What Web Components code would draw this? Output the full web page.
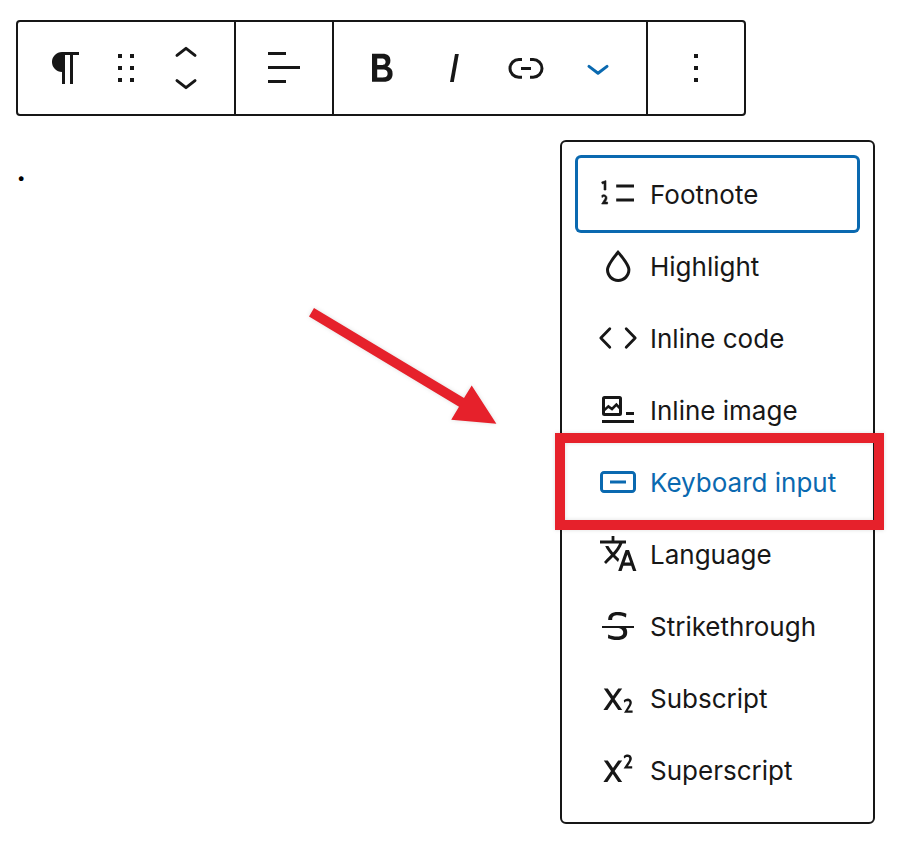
<!DOCTYPE html>
<html lang="en">
<head>
<meta charset="utf-8">
<title>Block editor</title>
<style>
  body {
    margin: 0;
    background: #fff;
    color: #171717;
    font-family: Inter, "Liberation Sans", sans-serif;
    --ink: #171717;
    --accent: #0a69b0;
    --mark: #e6212b;
  }
</style>
</head>
<body>
<block-editor>
  <block-toolbar slot="toolbar">
    <tool-group>
      <tool-button icon="paragraph" label="Paragraph" size="wide"></tool-button>
      <tool-button icon="drag" label="Drag" size="narrow"></tool-button>
      <block-mover></block-mover>
    </tool-group>
    <tool-group>
      <tool-button icon="align" label="Align text" size="wide"></tool-button>
    </tool-group>
    <tool-group padded>
      <tool-button icon="bold" label="Bold"></tool-button>
      <tool-button icon="italic" label="Italic"></tool-button>
      <tool-button icon="link" label="Link"></tool-button>
      <tool-button icon="chevron-down" label="More" active></tool-button>
    </tool-group>
    <tool-group>
      <tool-button icon="more" label="Options" size="wide"></tool-button>
    </tool-group>
  </block-toolbar>
  <editor-text slot="content">.</editor-text>
  <format-menu slot="menu">
    <format-item icon="footnote" focused>Footnote</format-item>
    <format-item icon="highlight">Highlight</format-item>
    <format-item icon="code">Inline code</format-item>
    <format-item icon="image">Inline image</format-item>
    <format-item icon="keyboard" marked>Keyboard input</format-item>
    <format-item icon="language">Language</format-item>
    <format-item icon="strikethrough">Strikethrough</format-item>
    <format-item icon="subscript">Subscript</format-item>
    <format-item icon="superscript">Superscript</format-item>
  </format-menu>
  <pointer-arrow slot="menu"></pointer-arrow>
</block-editor>

<script>
const stroke = (d, w) => `<path d="${d}" fill="none" stroke="currentColor" stroke-width="${w}" stroke-linecap="round" stroke-linejoin="round"/>`;
const fill = d => `<path d="${d}" fill="currentColor"/>`;

const ICONS = {
  paragraph: fill('m9.99609 14v-.2251l.00391.0001v6.225h1.5v-14.5h2.5v14.5h1.5v-14.5h3v-1.5h-8.50391c-2.76142 0-5 2.23858-5 5 0 2.7614 2.23858 5 5 5z'),
  drag: fill('M8 7h2V5H8v2zm0 6h2v-2H8v2zm0 6h2v-2H8v2zm6-14v2h2V5h-2zm0 8h2v-2h-2v2zm0 6h2v-2h-2v2z'),
  align: fill('M13 5.5H4V4h9v1.5Zm7 7H4V11h16v1.5Zm-7 7H4V18h9v1.5Z'),
  bold: fill('M14.7 11.3c1-.6 1.5-1.6 1.5-3 0-2.3-1.3-3.4-4-3.4H7v14h5.8c1.4 0 2.5-.3 3.3-1 .8-.7 1.2-1.7 1.2-2.9.1-1.9-.8-3.1-2.6-3.7zm-5.1-4h2.3c.6 0 1.1.1 1.4.4.3.3.5.7.5 1.2s-.2 1-.5 1.2c-.3.3-.8.4-1.4.4H9.6V7.3zm4.6 9c-.4.3-1 .4-1.7.4H9.6v-3.9h2.9c.7 0 1.3.2 1.7.5.4.3.6.8.6 1.5s-.2 1.2-.6 1.5z'),
  italic: fill('M12.5 5L10 19h1.9l2.5-14z'),
  link: fill('M10 17.389H8.444A5.194 5.194 0 1 1 8.444 7H10v1.5H8.444a3.694 3.694 0 0 0 0 7.389H10v1.5ZM14 7h1.556a5.194 5.194 0 0 1 0 10.39H14v-1.5h1.556a3.694 3.694 0 0 0 0-7.39H14V7Zm-4.5 6h5v-1.5h-5V13Z'),
  'chevron-down': stroke('M7.5 11.2 12 14.6 16.5 11.2', 1.5),
  'mover-up': stroke('M7.5 13.7 12 10.2 16.5 13.7', 1.5),
  'mover-down': stroke('M7.5 10.3 12 13.8 16.5 10.3', 1.5),
  more: fill('M13 19h-2v-2h2v2zm0-6h-2v-2h2v2zm0-6h-2V5h2v2z'),
  footnote: fill('M11.1 15.8H20v-1.5h-8.9v1.5zm0-8.6v1.5H20V7.2h-8.9z')
    + '<path d="M5 6.7V10h1V5.3L3.8 6l.4 1 .8-.3zm-.4 5.7c-.3.1-.5.2-.7.3l.1 1.1c.2-.2.5-.4.8-.5.3-.1.6 0 .7.2.2.3 0 .8-.4 1.4L3.8 17h3v-1H5.6c.5-.7.9-1.2.9-2 0-.6-.2-1-.6-1.3-.4-.3-.8-.4-1.3-.3z" fill="currentColor" stroke="currentColor" stroke-width=".3"/>',
  highlight: fill('M17.2 10.9c-.5-1-1.2-2.1-2.1-3.2-.6-.9-1.3-1.7-2.1-2.6L12 4l-1 1.1c-.6.9-1.3 1.7-2 2.6-.8 1.2-1.5 2.3-2 3.2-.6 1.2-1 2.2-1 3 0 3.4 2.7 6.1 6.1 6.1s6.1-2.7 6.1-6.1c0-.8-.3-1.8-1-3zm-5.1 7.6c-2.5 0-4.6-2.1-4.6-4.6 0-.3.1-1 .8-2.3.5-.9 1.1-1.9 2-3.1.7-.9 1.3-1.7 1.8-2.3.7.8 1.3 1.6 1.8 2.3.8 1.1 1.5 2.2 2 3.1.7 1.3.8 2 .8 2.3 0 2.5-2.1 4.6-4.6 4.6z'),
  code: stroke('M7.9 7.4 3.4 12l4.5 4.6M16.1 7.4 20.6 12l-4.5 4.6', 1.4),
  image: '<rect x="4.75" y="5.75" width="8.5" height="8.5" rx=".5" fill="none" stroke="currentColor" stroke-width="1.5"/>'
    + '<path d="M5 12.2 7.2 10.2 9 11.5 11.2 9.3 13 11.2" fill="none" stroke="currentColor" stroke-width="1.3"/>'
    + fill('M16 13h4v1.5h-4zM4 17h16v1.5H4z'),
  keyboard: fill('M19 6.5H5c-1.1 0-2 .9-2 2v7c0 1.1.9 2 2 2h14c1.1 0 2-.9 2-2v-7c0-1.1-.9-2-2-2zm.5 9c0 .3-.2.5-.5.5H5c-.3 0-.5-.2-.5-.5v-7c0-.3.2-.5.5-.5h14c.3 0 .5.2.5.5v7zM8 12.8h8v-1.5H8v1.5z'),
  language: fill('M17.5 10h-1.7l-3.7 10.5h1.7l.9-2.6h3.9l.9 2.6h1.7L17.5 10zm-2.2 6.3 1.4-4 1.4 4h-2.8zm-4.8-3.8c1.6-1.8 2.9-3.6 3.7-5.7H16V5.2h-5.8V3H8.8v2.2H3v1.5h9.6c-.7 1.6-1.8 3.1-3.1 4.6C8.6 10.2 7.8 9 7.2 8H5.6c.6 1.4 1.7 2.9 2.9 4.4l-2.4 2.4c-.3.4-.7.8-1.1 1.2l1 1 1.2-1.2c.8-.8 1.6-1.5 2.3-2.3.8.9 1.7 1.7 2.5 2.5l.6-1.5c-.7-.6-1.4-1.3-2.1-2z'),
  strikethrough: fill('M9.1 9v-.5c0-.6.2-1.1.7-1.4.5-.3 1.2-.5 2-.5.7 0 1.4.1 2.1.3.7.2 1.4.5 2.1.9l.2-1.9c-.6-.3-1.2-.5-1.9-.7-.8-.1-1.6-.2-2.4-.2-1.5 0-2.7.3-3.6 1-.8.7-1.2 1.5-1.2 2.6V9h2zM20 12H4v1h8.3c.3.1.6.2.8.3.5.2.9.5 1.1.8.3.3.4.7.4 1.2 0 .7-.2 1.1-.8 1.5-.5.3-1.2.5-2.1.5-.8 0-1.6-.1-2.4-.3-.8-.2-1.5-.5-2.2-.8L7 18.1c.5.2 1.2.4 2 .6.8.2 1.6.3 2.4.3 1.7 0 3-.3 3.9-1 .9-.7 1.3-1.6 1.3-2.8 0-.9-.2-1.7-.7-2.2H20v-1z'),
  subscript: fill('M16.9 18.3l.8-1.2c.4-.6.7-1.2.9-1.6.2-.4.3-.8.3-1.2 0-.3-.1-.7-.3-1-.1-.3-.4-.5-.6-.7-.3-.2-.6-.3-1-.3s-.8.1-1.1.2c-.3.1-.7.3-1 .6l.2 1.3c.3-.3.5-.5.8-.6s.6-.2.9-.2c.3 0 .5.1.7.2.2.2.2.4.2.7 0 .3-.1.5-.2.8-.1.3-.4.7-.8 1.3L15 19.4h4.3v-1.2h-2.4zM14.1 7.2h-2L9.5 11 6.9 7.2h-2l3.6 5.3L4.7 18h2l2.7-4 2.7 4h2l-3.8-5.5 3.8-5.3z'),
  superscript: fill('M16.9 10.3l.8-1.3c.4-.6.7-1.2.9-1.6.2-.4.3-.8.3-1.2 0-.3-.1-.7-.3-1-.2-.3-.4-.5-.7-.7s-.6-.3-.9-.3c-.4 0-.8.1-1.1.2-.3.1-.7.3-1 .6l.1 1.3c.3-.3.5-.5.8-.6s.6-.2.9-.2c.3 0 .5.1.7.2.2.2.2.4.2.7 0 .3-.1.5-.2.8-.1.3-.4.7-.8 1.3l-1.8 2.8h4.3v-1.2h-2.2zm-2.8-3.1h-2L9.5 11 6.9 7.2h-2l3.6 5.3L4.7 18h2l2.7-4 2.7 4h2l-3.8-5.5 3.8-5.3z')
};

function define(name, render) {
  customElements.define(name, class extends HTMLElement {
    constructor() {
      super();
      this.attachShadow({ mode: 'open' });
    }
    connectedCallback() {
      this.shadowRoot.innerHTML = render(this);
    }
  });
}

define('ui-icon', el => `
  <style>
    :host { display: block; flex: none; width: 48px; height: 48px; }
    svg { display: block; width: 100%; height: 100%; }
  </style>
  <svg viewBox="0 0 24 24" aria-hidden="true">${ICONS[el.getAttribute('name')]}</svg>`);

define('tool-button', el => `
  <style>
    :host { display: flex; width: 72px; }
    :host([size="wide"]) { width: 96px; }
    :host([size="narrow"]) { width: 24px; }
    button {
      flex: 1; min-width: 0; display: flex; align-items: center; justify-content: center;
      padding: 0; border: 0; background: none; color: var(--ink);
    }
    :host([active]) button { color: var(--accent); }
  </style>
  <button type="button" aria-label="${el.getAttribute('label')}"><ui-icon name="${el.getAttribute('icon')}"></ui-icon></button>`);

define('block-mover', () => `
  <style>
    :host { display: flex; flex-direction: column; justify-content: center; width: 96px; }
    button {
      height: 32px; display: flex; align-items: center; justify-content: center;
      padding: 0; border: 0; background: none; color: var(--ink);
    }
  </style>
  <button type="button" aria-label="Move up"><ui-icon name="mover-up"></ui-icon></button>
  <button type="button" aria-label="Move down"><ui-icon name="mover-down"></ui-icon></button>`);

define('tool-group', () => `
  <style>
    :host { display: flex; min-height: 92px; }
    :host(:not(:first-child)) { border-left: 2px solid var(--ink); }
    :host([padded]) { padding: 0 12px; }
  </style>
  <slot></slot>`);

define('block-toolbar', () => `
  <style>
    :host { display: flex; width: fit-content; border: 2px solid var(--ink); border-radius: 4px; background: #fff; }
  </style>
  <slot></slot>`);

define('editor-text', () => `
  <style>
    :host { display: block; color: #000; }
    p { margin: 0; font-size: 36px; line-height: 48px; }
  </style>
  <p><slot></slot></p>`);

define('format-menu', () => `
  <style>
    :host {
      position: absolute; top: 140px; left: 560px;
      display: flex; flex-direction: column; padding: 16px;
      border: 2px solid var(--ink); border-radius: 6px; background: #fff;
    }
  </style>
  <slot></slot>`);

define('format-item', el => `
  <style>
    :host { display: flex; position: relative; }
    button {
      flex: 1; display: flex; align-items: center; gap: 8px; min-height: 72px;
      padding: 0 21px 0 16px; border: 0; border-radius: 3px; background: none; color: var(--ink);
      font-family: inherit; font-size: 26px; line-height: 36px; text-align: left; white-space: nowrap;
    }
    span { padding-top: 2px; }
    :host([focused]) button { box-shadow: 0 0 0 3px var(--accent); }
    :host([marked]) button { color: var(--accent); }
    .mark {
      position: absolute; z-index: 1; inset: -13px -27px -12px -23px;
      border: 10px solid var(--mark); pointer-events: none;
      box-shadow: 0 0 4px #0002, inset 0 0 4px #0002;
    }
  </style>
  <button type="button"><ui-icon name="${el.getAttribute('icon')}"></ui-icon><span><slot></slot></span></button>
  ${el.hasAttribute('marked') ? '<div class="mark"></div>' : ''}`);

define('pointer-arrow', () => `
  <style>
    :host { position: absolute; top: 300px; left: 300px; width: 204px; height: 132px; pointer-events: none; }
    svg { display: block; width: 100%; height: 100%; filter: drop-shadow(0 0 2px #0002); }
  </style>
  <svg viewBox="300 300 204 132" aria-hidden="true">
    <path fill="var(--mark)" d="M314 308 464 398 471.7 385.6 496.4 423.8 451.2 419.7 459 406.7 309 316.5Z"/>
  </svg>`);

define('block-editor', () => `
  <style>
    :host { display: block; position: relative; }
    main { display: flex; flex-direction: column; gap: 28px; min-height: 100vh; box-sizing: border-box; padding: 20px 16px; }
  </style>
  <main>
    <slot name="toolbar"></slot>
    <slot name="content"></slot>
  </main>
  <slot name="menu"></slot>`);
</script>
</body>
</html>
